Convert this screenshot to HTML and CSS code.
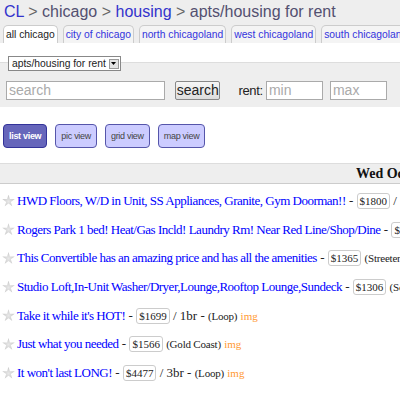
FILE: index.html
```html
<!DOCTYPE html>
<html>
<head>
<meta charset="utf-8">
<link rel="stylesheet" href="styles.css">
</head>
<body>
<div class="header">
  <div class="crumbs"><a class="lnk" href="#">CL</a> <span class="sep">&gt;</span> <a class="vis" href="#">chicago</a> <span class="sep">&gt;</span> <a class="lnk" href="#">housing</a> <span class="sep">&gt;</span> <span class="here">apts/housing for rent</span></div>
  <div class="tabs">
    <span class="tab sel">all chicago</span>
    <a class="tab" href="#">city of chicago</a>
    <a class="tab" href="#">north chicagoland</a>
    <a class="tab" href="#">west chicagoland</a>
    <a class="tab" href="#">south chicagoland</a>
  </div>
</div>
<fieldset class="search">
  <legend class="legend"><span class="select">apts/housing for rent<span class="arrow"><svg width="5" height="3" viewBox="0 0 5 3"><path d="M0 0H5L2.5 3Z" fill="#000"/></svg></span></span></legend>
  <div class="srow">
    <span class="inp q">search</span>
    <span class="btn">search</span>
    <span class="rent">rent:</span>
    <span class="inp num">min</span>
    <span class="inp num">max</span>
  </div>
</fieldset>
<div class="views">
  <span class="vb on">list view</span>
  <span class="vb">pic view</span>
  <span class="vb">grid view</span>
  <span class="vb">map view</span>
</div>
<div class="datebar"><span class="date">Wed Oct 31</span></div>
<div class="list">
  <p class="row"><span class="star"></span><a class="t" href="#">HWD Floors, W/D in Unit, SS Appliances, Granite, Gym Doorman!!</a> - <span class="price">$1800</span> / 1br - <small>(Gold Coast)</small></p>
  <p class="row"><span class="star"></span><a class="t" href="#">Rogers Park 1 bed! Heat/Gas Incld! Laundry Rm! Near Red Line/Shop/Dine</a> - <span class="price">$850</span> / 1br</p>
  <p class="row"><span class="star"></span><a class="t" href="#">This Convertible has an amazing price and has all the amenities</a> - <span class="price">$1365</span> <small>(Streeterville)</small></p>
  <p class="row"><span class="star"></span><a class="t" href="#">Studio Loft,In-Unit Washer/Dryer,Lounge,Rooftop Lounge,Sundeck</a> - <span class="price">$1306</span> <small>(South Loop)</small></p>
  <p class="row"><span class="star"></span><a class="t" href="#">Take it while it's HOT!</a> - <span class="price">$1699</span> / 1br - <small>(Loop)</small> <span class="img">img</span></p>
  <p class="row"><span class="star"></span><a class="t" href="#">Just what you needed</a> - <span class="price">$1566</span> <small>(Gold Coast)</small> <span class="img">img</span></p>
  <p class="row"><span class="star"></span><a class="t" href="#">It won't last LONG!</a> - <span class="price">$4477</span> / 3br - <small>(Loop)</small> <span class="img">img</span></p>
</div>
</body>
</html>
```
FILE: styles.css
```css
html, body { margin: 0; padding: 0; overflow: hidden; }
body { font-family: "Liberation Sans", Arial, sans-serif; color: #222; background: #fff; width: 400px; }
a { text-decoration: none; }
.header { background: #eee; padding: 2px 0 0 4px; }
.crumbs { font-size: 16px; line-height: 20px; color: #555; white-space: nowrap; }
.lnk { color: #33c; }
.vis { color: #535070; }
.here { color: #535070; }
.sep { color: #666; }
.tabs { display: flex; gap: 5px; margin: 3px 0 0 -1px; white-space: nowrap; }
.tab { font-size: 10.3px; line-height: 17px; padding: 0 2px; border: 1px solid #ccc; border-bottom: none; border-radius: 5px 5px 0 0; color: #33d; background: #f4f4f4; }
.tab.sel { background: #fff; color: #222; }
.search { margin: 10px 0 0 0; padding: 10px 6px 7px 6px; border: none; border-top: 1px solid #ddd; background: #eee; min-width: 0; }
.legend { padding: 0; margin-left: 2px; }
.select { display: inline-flex; align-items: center; gap: 3px; font-size: 10.3px; line-height: 13px; background: #fff; border: 1px solid #888; padding: 0 1px 0 3px; color: #222; }
.arrow { display: inline-flex; align-items: center; justify-content: center; width: 8px; height: 8px; border: 1px solid #999; background: #e4e4e4; }
.srow { display: flex; align-items: center; }
.inp { display: inline-block; box-sizing: border-box; height: 19px; border: 1px solid #aaa; background: #fff; color: #aaa; font-size: 14px; line-height: 17px; padding: 0 2px; }
.q { width: 162px; }
.btn { margin-left: 10px; box-sizing: border-box; height: 19px; width: 46px; font-size: 14px; line-height: 17px; text-align: center; border: 1px solid #888; border-radius: 2px; background: linear-gradient(#f6f6f6, #ddd); color: #222; }
.rent { margin-left: 18px; font-size: 13px; letter-spacing: -0.3px; color: #222; margin-right: 3px; }
.num { width: 58px; margin-right: 7px; }
.views { display: flex; gap: 8px; padding: 17px 0 0 3px; }
.vb { box-sizing: border-box; height: 24px; padding: 0 5px; font-size: 9px; letter-spacing: -0.3px; line-height: 22px; border: 1px solid #55a; border-radius: 4px; background: #ccf; color: #444; }
.vb.on { background: #66b; color: #fff; font-weight: bold; border-color: #339; }
.datebar { margin-top: 15px; height: 19px; background: #eee; border-top: 1px solid #ddd; border-bottom: 1px solid #ccc; white-space: nowrap; overflow: hidden; }
.date { display: inline-block; padding-left: 356px; font-family: "Liberation Serif", "Times New Roman", serif; font-weight: bold; font-size: 14px; line-height: 19px; color: #111; }
.list { padding-top: 3px; font-family: "Liberation Serif", "Times New Roman", serif; }
.row { margin: 0; height: 28.7px; line-height: 28.7px; white-space: nowrap; overflow: hidden; font-size: 13px; color: #222; }
.star { display: inline-block; vertical-align: middle; width: 13px; height: 13px; margin: -2px 2px 0 2px; background: radial-gradient(circle, #e8e8e8, #bbb); clip-path: polygon(50% 0%, 61% 35%, 98% 35%, 68% 57%, 79% 91%, 50% 70%, 21% 91%, 32% 57%, 2% 35%, 39% 35%); }
.t { color: #00f; letter-spacing: -0.5px; }
.price { display: inline-block; vertical-align: middle; margin-top: -2px; font-size: 11px; line-height: 14px; padding: 0 2px; border: 1px solid #ccc; border-radius: 3px; }
small { font-size: 11px; letter-spacing: -0.2px; }
.img { font-size: 11px; color: #f93; }
```
